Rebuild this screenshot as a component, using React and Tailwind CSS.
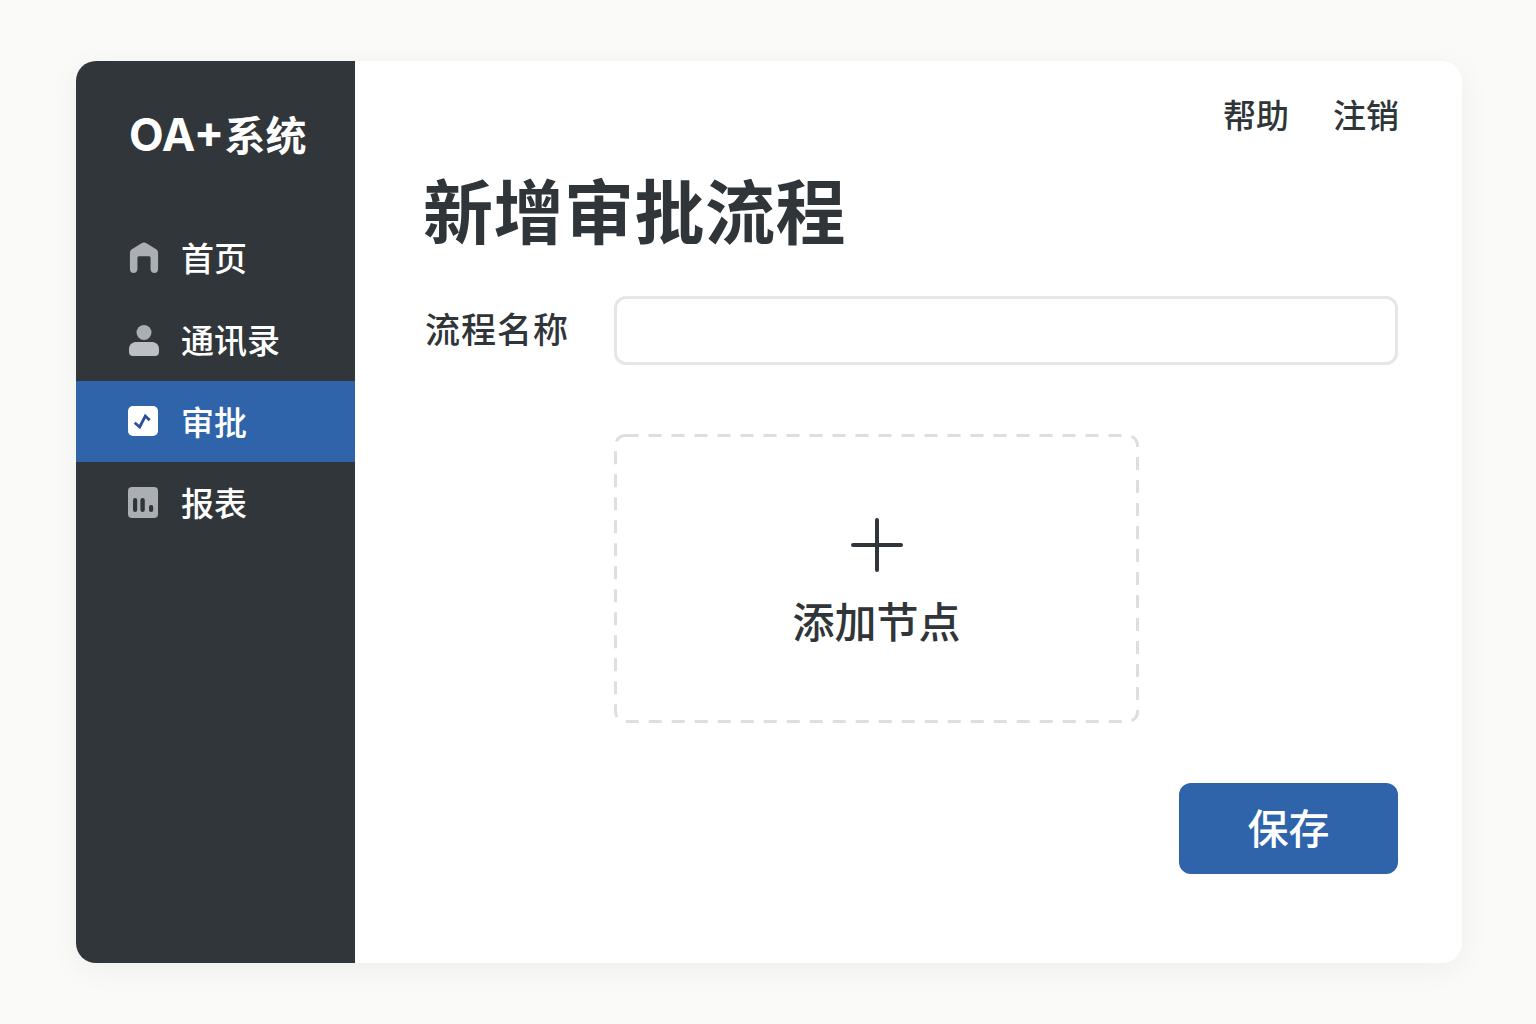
import React from 'react'

const cjk = { fontFamily: '"Noto Sans CJK SC", "Noto Sans", sans-serif' }

function HomeIcon() {
  return (
    <svg width="30" height="32" viewBox="0 0 32 34" className="ml-[1px] mt-[2px]">
      <path fillRule="evenodd" fill="#abafb3" d="M1 11.5 C1 10 1.6 9 2.6 8 L13 1.4 C15 .2 17 .2 19 1.4 L29.4 8 C30.4 9 31 10 31 11.5 V29 C31 31.5 29.4 33 27.2 33 C25 33 23 31.5 23 29 V17 C23 15.6 22.2 15 21 15 H11 C9.8 15 9 15.6 9 17 V29 C9 31.5 7 33 4.8 33 C2.6 33 1 31.5 1 29 Z" />
    </svg>
  )
}

function UserIcon() {
  return (
    <svg width="30" height="31" viewBox="0 0 30 31" className="ml-[1px] mt-[2px]">
      <circle cx="15" cy="7.5" r="7.5" fill="#abafb3" />
      <path fill="#bcc0c4" d="M0 24 C0 19.5 3.5 17 7.5 17 H22.5 C26.5 17 30 19.5 30 24 V27 C30 29.5 28.5 31 26 31 H4 C1.5 31 0 29.5 0 27 Z" />
    </svg>
  )
}

function CheckIcon() {
  return (
    <svg width="30" height="30" viewBox="0 0 30 30">
      <rect width="30" height="30" rx="5" fill="#ffffff" />
      <path d="M6.7 16.7 L11.7 21 L17.3 10 L21.7 14.3" fill="none" stroke="#2a4f9e" strokeWidth="2.8" />
    </svg>
  )
}

function ChartIcon() {
  return (
    <svg width="30" height="31" viewBox="0 0 30 31">
      <rect width="30" height="31" rx="4" fill="#abafb3" />
      <rect x="5" y="11" width="4.2" height="14" rx="2.1" fill="#2f3538" />
      <rect x="12.4" y="11" width="4.4" height="14" rx="2.2" fill="#2f3538" />
      <rect x="21" y="18" width="4.2" height="7" rx="2.1" fill="#2f3538" />
    </svg>
  )
}

function NavItem({ icon, label, active }) {
  return (
    <div className={active ? "h-[81px] flex items-center pl-[52px] gap-[22px] bg-[#2f64ab]" : "h-[82px] flex items-center pl-[52px] gap-[22px]"}>
      <span className="w-[31px] pb-[2px]">{icon}</span>
      <span className="pb-[1px] text-[33px] leading-none font-medium text-white">{label}</span>
    </div>
  )
}

export default function App() {
  return (
    <div className="w-[1536px] h-[1024px] bg-[#fafaf9] pt-[61px] pl-[76px] overflow-hidden" style={cjk}>
      <div className="w-[1386px] h-[902px] flex rounded-[20px] bg-white overflow-hidden shadow-[0_6px_30px_rgba(0,0,0,0.05)]">
        <aside className="w-[279px] shrink-0 bg-[#303639]">
          <div className="h-[155px] pt-[46px] pl-[53px] text-[41px] leading-[56px] font-bold text-white whitespace-nowrap" style={{ fontFamily: 'Inter, "Noto Sans CJK SC", sans-serif' }}>
            <span className="text-[45px]">OA+</span>系统
          </div>
          <nav className="pt-[1px]">
            <NavItem icon={<HomeIcon />} label="首页" />
            <NavItem icon={<UserIcon />} label="通讯录" />
            <NavItem icon={<CheckIcon />} label="审批" active />
            <NavItem icon={<ChartIcon />} label="报表" />
          </nav>
        </aside>

        <main className="flex-1 flex flex-col pl-[70px] pr-[64px]">
          <div className="flex justify-end gap-[44px] -mr-[1px] pt-[30px] text-[33px] leading-[46px] font-medium text-[#2f3538]">
            <span>帮助</span>
            <span>注销</span>
          </div>
          <h1 className="mt-[22px] -ml-[2px] text-[70px] tracking-[0.5px] leading-[100px] font-bold text-[#2f3538]">新增审批流程</h1>
          <div className="mt-[37px] flex items-center">
            <label className="w-[189px] pb-[6px] text-[35px] tracking-[1px] leading-none font-medium text-[#2f3538] whitespace-nowrap">流程名称</label>
            <input className="flex-1 h-[69px] rounded-[12px] border-[3px] border-[#e6e6e6] bg-white" />
          </div>
          <div className="relative mt-[69px] ml-[189px] w-[525px] h-[289px] flex flex-col items-center">
            <svg width="525" height="289" className="absolute inset-0">
              <rect x="1.5" y="1.5" width="522" height="286" rx="10" fill="none" stroke="#dedede" strokeWidth="3" strokeDasharray="13 10" />
            </svg>
            <svg width="52" height="54" viewBox="0 0 52 54" className="mt-[84px]">
              <path d="M2 27 H50 M26 2 V52" stroke="#2f3538" strokeWidth="4" strokeLinecap="round" />
            </svg>
            <span className="mt-[18px] text-[42px] leading-[60px] font-medium text-[#2f3538]">添加节点</span>
          </div>
          <div className="mt-[60px] flex justify-end">
            <button className="w-[219px] h-[91px] pb-[4px] rounded-[12px] bg-[#2f64ab] text-[41px] leading-none font-medium text-white">保存</button>
          </div>
        </main>
      </div>
    </div>
  )
}
